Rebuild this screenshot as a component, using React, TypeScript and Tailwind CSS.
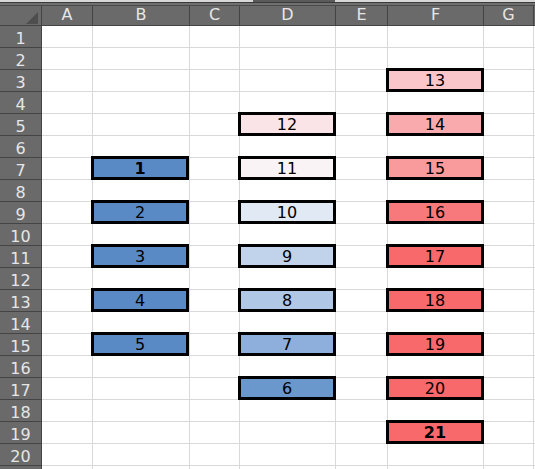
import React from "react";

type Cell = { v: number; bg: string; bold?: boolean };

const data: Record<string, Cell> = {
  B7: { v: 1, bg: "bg-[#5a8ac6]", bold: true },
  B9: { v: 2, bg: "bg-[#5a8ac6]" },
  B11: { v: 3, bg: "bg-[#5a8ac6]" },
  B13: { v: 4, bg: "bg-[#5a8ac6]" },
  B15: { v: 5, bg: "bg-[#5a8ac6]" },
  D5: { v: 12, bg: "bg-[#fbe4e8]" },
  D7: { v: 11, bg: "bg-[#faf3f6]" },
  D9: { v: 10, bg: "bg-[#e0e9f4]" },
  D11: { v: 9, bg: "bg-[#c1d3eb]" },
  D13: { v: 8, bg: "bg-[#b1c7e6]" },
  D15: { v: 7, bg: "bg-[#8eaedb]" },
  D17: { v: 6, bg: "bg-[#6a97cc]" },
  F3: { v: 13, bg: "bg-[#fbc6ca]" },
  F5: { v: 14, bg: "bg-[#f9aaad]" },
  F7: { v: 15, bg: "bg-[#f99a9d]" },
  F9: { v: 16, bg: "bg-[#f8797c]" },
  F11: { v: 17, bg: "bg-[#f8696b]" },
  F13: { v: 18, bg: "bg-[#f8696b]" },
  F15: { v: 19, bg: "bg-[#f8696b]" },
  F17: { v: 20, bg: "bg-[#f8696b]" },
  F19: { v: 21, bg: "bg-[#f8696b]", bold: true },
};

const cols = ["A", "B", "C", "D", "E", "F", "G"];
const rows = Array.from({ length: 21 }, (_, i) => i + 1);

export default function App() {
  return (
    <div
      className="w-[535px] h-[469px] overflow-hidden bg-white"
      style={{ fontFamily: '"DejaVu Sans", Verdana, sans-serif' }}
    >
      {/* top strip */}
      <div className="h-[2px] flex">
        <div className="w-[253px] bg-[#d8d8d8]" />
        <div className="w-[82px] bg-[#5a5a5a]" />
        <div className="flex-1 bg-[#d8d8d8]" />
      </div>
      <div className="h-[1px] bg-[#3a3a3a]" />
      <div className="h-[2px] bg-[#707070]" />
      <div className="h-[1px] bg-[#4a4a4a]" />

      <div className="grid grid-cols-[42px_51px_97px_50px_96px_52px_96px_50px_1fr] grid-rows-[20px] auto-rows-[22px] text-[16px] leading-[21px]">
        {/* header row */}
        <div className="bg-[#6a6a6a] border-r border-b border-[#444444] flex justify-end items-end pr-[3px] pb-[1px]">
          <svg width="12" height="12" viewBox="0 0 12 12">
            <polygon points="12,0 12,12 0,12" fill="#4e4e4e" />
          </svg>
        </div>
        {cols.map((c) => (
          <div
            key={c}
            className="bg-[#6a6a6a] border-r border-b border-[#444444] text-[#e6e6e6] flex justify-center items-end leading-[20px]"
          >
            {c}
          </div>
        ))}
        <div className="bg-[#6a6a6a] border-b border-[#444444]" />

        {rows.map((r) => (
          <React.Fragment key={r}>
            <div className="bg-[#6a6a6a] border-r border-b border-[#444444] text-[#e6e6e6] text-center pt-[2px]">
              {r <= 20 ? r : ""}
            </div>
            {cols.map((c) => {
              const cell = data[`${c}${r}`];
              return (
                <div key={c} className="border-r border-b border-[#d9d9d9]">
                  {cell && (
                    <div
                      className={`relative z-10 -ml-[2px] -mt-[2px] w-[98px] h-[24px] border-[3px] border-black ${cell.bg} text-black text-center leading-[18px] pt-[1px] ${
                        cell.bold ? "font-bold" : ""
                      }`}
                    >
                      {cell.v}
                    </div>
                  )}
                </div>
              );
            })}
            <div className="border-b border-[#d9d9d9]" />
          </React.Fragment>
        ))}
      </div>
    </div>
  );
}
